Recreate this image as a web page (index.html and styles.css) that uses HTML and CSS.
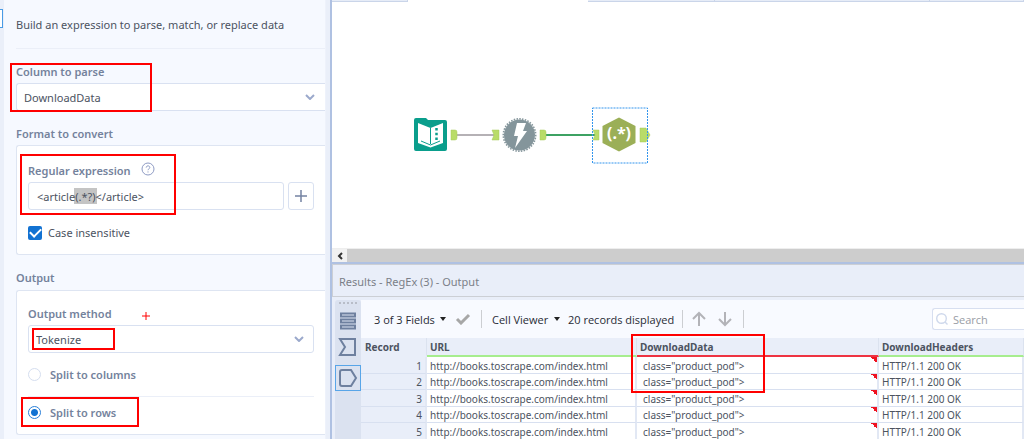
FILE: index.html
```html
<!DOCTYPE html>
<html lang="en">
<head>
<meta charset="utf-8">
<title>RegEx configuration</title>
<link rel="stylesheet" href="styles.css">
</head>
<body>
<div class="app">
  <div class="rail"><span class="rail-tab"></span></div>
  <form class="config">
    <p class="intro">Build an expression to parse, match, or replace data</p>
    <label class="label" for="column">Column to parse</label>
    <div class="picker picker-open">
      <select id="column"><option>DownloadData</option></select>
      <svg class="chevron" viewBox="0 0 10 6"><path d="M1 1l4 4 4-4"/></svg>
    </div>
    <h2 class="label">Format to convert</h2>
    <section class="card format">
      <div class="field-head">
        <label for="regex">Regular expression</label>
        <svg class="help" viewBox="0 0 14 14"><circle cx="7" cy="7" r="6"/><path d="M5.2 5.6c0-2.4 3.7-2.3 3.6 0 0 1.200-1.800 1.200-1.800 2.600M7 9.400v1.100"/></svg>
      </div>
      <div class="regex-row">
        <input class="regex" id="regex" type="text" value="&lt;article(.*?)&lt;/article&gt;">
        <button class="add" type="button" aria-label="Add"><svg viewBox="0 0 12 12"><path d="M6 0v12M0 6h12"/></svg></button>
      </div>
      <label class="check"><input type="checkbox" checked>Case insensitive</label>
    </section>
    <h2 class="label">Output</h2>
    <section class="card output">
      <label class="field-head" for="method">Output method</label>
      <div class="picker">
        <select id="method"><option>Tokenize</option></select>
        <svg class="chevron" viewBox="0 0 10 6"><path d="M1 1l4 4 4-4"/></svg>
      </div>
      <label class="radio"><input type="radio" name="split">Split to columns</label>
      <label class="radio last"><input type="radio" name="split" checked>Split to rows</label>
    </section>
  </form>
  <div class="splitter"></div>
  <main class="work">
    <div class="tabs"><span class="tab"></span><span class="tab active"></span><span class="tab"></span><span class="tab"></span><span class="tab"></span></div>
    <div class="canvas">
      <svg class="flow" viewBox="0 0 270 90">
        <path d="M57 45h39" stroke="#b5b1b5" stroke-width="2"/>
        <path d="M145 45h50" stroke="#3da263" stroke-width="2"/>
        <g fill="#b9dc68" stroke="#a6ca58" stroke-width=".5">
          <path d="M51 40h4q2 0 2 2v6q0 2-2 2h-4z"/>
          <path d="M92 40h7v10h-7l2-5z"/>
          <path d="M140 40h4q2 0 2 2v6q0 2-2 2h-4z"/>
          <path d="M193 40h6v10h-6l2-5z"/>
          <path d="M240 38h6l4 7-4 7h-6z"/>
        </g>
        <path d="M16 28h10l2 2h17q2 0 2 2v27q0 2-2 2H16q-2 0-2-2V30q0-2 2-2z" fill="#0a9e8c"/>
        <path d="M18 33l12.500 5L43 33v20l-12.500 4.500L18 53z" fill="#fff"/>
        <path d="M30.500 38v16M21 51l9.500 4 9.500-4" fill="none" stroke="#0a9e8c"/>
        <path d="M36.500 38v12" stroke="#0a9e8c" stroke-width="2.500" stroke-dasharray="2.500 2.300"/>
        <circle cx="119.500" cy="45" r="15.500" fill="#84959b"/>
        <circle cx="119.500" cy="45" r="16.200" fill="none" stroke="#84959b" stroke-width="1.600" stroke-dasharray="1.500 1.300"/>
        <path d="M117 33h9l-3 8h4l-12 17 3-12h-4z" fill="#fff"/>
        <path d="M219 27.500l16.500 8.500v17L219 61.500 202.500 53V36z" fill="#9baf57"/>
        <text x="219" y="49" text-anchor="middle" class="regex-glyph">(.*)</text>
        <path d="M192.500 18h55v55h-55z" fill="none" stroke="#3295ed" stroke-dasharray="2 1"/>
      </svg>
    </div>
    <div class="scroll"><button type="button" aria-label="Scroll left"><svg viewBox="0 0 6 8"><path d="M5 1L2 4l3 3"/></svg></button><span class="thumb"></span></div>
    <h1 class="results-title">Results - RegEx (3) - Output</h1>
    <section class="results">
      <nav class="side">
        <span class="grip"></span>
        <button type="button" aria-label="Messages"><svg viewBox="0 0 24 24"><path d="M5 4.500h14v3H5zM5 10.500h14v3H5zM5 16.500h14v3H5z"/></svg></button>
        <button type="button" aria-label="Input"><svg viewBox="0 0 24 24"><path d="M4 4h15v16H4l5-8z"/></svg></button>
        <button type="button" class="current" aria-label="Output"><svg viewBox="0 0 24 24"><path d="M6 4h9l5 8-5 8H6q-2 0-2-2V6q0-2 2-2z"/></svg></button>
      </nav>
      <div class="data">
        <div class="toolbar">
          <button type="button" class="menu fields">3 of 3 Fields<i class="caret"></i></button>
          <svg class="tick" viewBox="0 0 16 12"><path d="M2 6l4 4 8-8"/></svg>
          <i class="bar"></i>
          <button type="button" class="menu viewer">Cell Viewer<i class="caret"></i></button>
          <span class="count">20 records displayed</span>
          <i class="bar"></i>
          <button type="button" class="arrow" aria-label="Previous"><svg viewBox="0 0 16 16"><path d="M8 15V2M2 8l6-6 6 6"/></svg></button>
          <button type="button" class="arrow" aria-label="Next"><svg viewBox="0 0 16 16"><path d="M8 1v13M2 8l6 6 6-6"/></svg></button>
          <i class="bar"></i>
          <label class="search"><svg viewBox="0 0 14 14"><circle cx="6.500" cy="6.500" r="4.800"/><path d="M10 10l2.500 2.500"/></svg><input type="text" placeholder="Search" aria-label="Search"></label>
        </div>
        <table>
          <colgroup><col class="c-record"><col class="c-url"><col class="c-data"><col></colgroup>
          <thead><tr><th class="rec">Record</th><th>URL</th><th class="bad">DownloadData</th><th>DownloadHeaders</th></tr></thead>
          <tbody>
            <tr><td>1</td><td>http://books.toscrape.com/index.html</td><td>class="product_pod"&gt;</td><td>HTTP/1.1 200 OK</td></tr>
            <tr><td>2</td><td>http://books.toscrape.com/index.html</td><td>class="product_pod"&gt;</td><td>HTTP/1.1 200 OK</td></tr>
            <tr><td>3</td><td>http://books.toscrape.com/index.html</td><td>class="product_pod"&gt;</td><td>HTTP/1.1 200 OK</td></tr>
            <tr><td>4</td><td>http://books.toscrape.com/index.html</td><td>class="product_pod"&gt;</td><td>HTTP/1.1 200 OK</td></tr>
            <tr><td>5</td><td>http://books.toscrape.com/index.html</td><td>class="product_pod"&gt;</td><td>HTTP/1.1 200 OK</td></tr>
          </tbody>
        </table>
      </div>
    </section>
  </main>
  <span class="mark mark-column"></span>
  <span class="mark mark-regex"></span>
  <span class="mark mark-method"></span>
  <span class="mark mark-rows"></span>
  <span class="mark mark-data"></span>
  <svg class="cross" viewBox="0 0 8 8"><path d="M4 0v8M0 4h8"/></svg>
</div>
</body>
</html>
```
FILE: styles.css
```css
* { box-sizing: border-box; }
body { margin: 0; font-family: "Noto Sans", "Open Sans", sans-serif; font-size: 11px; color: #4c535f; }
button, input, select { font: inherit; color: inherit; margin: 0; }
button { border: 0; padding: 0; background: none; display: flex; align-items: center; justify-content: center; }
svg { fill: none; display: block; flex: none; }

.app { position: relative; display: flex; min-height: 100vh; overflow: hidden; }
.rail { width: 4px; flex: none; padding-top: 9px; background: #eaeff9; }
.rail-tab { display: block; width: 3px; height: 19px; border: 1px solid #4a9be5; border-left: 0; background: #fff; }

.config { width: 321px; flex: none; padding: 0 0 4px 12px; background: #f6f9ff; }
.intro { margin: 0 0 15px; height: 49px; line-height: 50px; border-bottom: 1px solid #ebeff8; white-space: nowrap; }
.label { display: block; margin: 0; font-size: 11px; line-height: 16px; font-weight: 600; color: #74829c; }
.picker { position: relative; display: flex; height: 28px; }
.picker select { flex: 1; appearance: none; padding: 0 7px; border: 1px solid #d9e1f1; border-radius: 3px; background: #fff; color: #4c535f; }
.picker-open { margin: 3px 0 15px; }
.picker-open select { border-right: 0; border-radius: 3px 0 0 3px; }
.chevron { position: absolute; right: 10px; top: 11px; width: 10px; height: 6px; stroke: #9ba9cc; stroke-width: 2; pointer-events: none; }

.card { margin-top: 3px; padding: 16px 11px 0; border: 1px solid #dee5f2; border-right: 0; border-radius: 3px 0 0 3px; background: #fff; }
.format { height: 110px; margin-bottom: 15px; }
.output { height: 145px; margin-top: 4px; padding-top: 14px; }
.field-head { display: flex; gap: 10px; height: 20px; line-height: 18px; font-weight: 600; color: #74829c; }
.help { width: 14px; height: 14px; stroke: #8e9bc4; }
.regex-row { display: flex; gap: 4px; }
.regex { flex: 1; min-width: 0; height: 28px; padding: 0 8px; border: 1px solid #d9e1f1; border-radius: 3px; background: linear-gradient(#c4c4c4, #c4c4c4) 45px 5px / 23px 16px no-repeat #fff; }
.add { width: 26px; height: 28px; border: 1px solid #d9e1f1; border-radius: 3px; background: #fff; }
.add svg { width: 12px; height: 12px; stroke: #7483a3; stroke-width: 1.5; }
.check, .radio { display: flex; align-items: center; }
.check { margin-top: 15px; gap: 6px; line-height: 16px; }
.check input { appearance: none; width: 14px; height: 14px; border-radius: 2px; background: #1272d2; display: grid; place-items: center; }
.check input::before { content: ""; width: 9px; height: 5px; margin-top: -3px; border: solid #fff; border-width: 0 0 2px 2px; transform: rotate(-45deg); }
.radio { height: 44px; gap: 9px; font-weight: 600; color: #74829c; border-bottom: 1px solid #ebeff8; }
.radio.last { height: 30px; border: 0; }
.radio input { appearance: none; width: 13px; height: 13px; border: 1px solid #d5deef; border-radius: 50%; background: #fff; }
.radio input:checked { border-color: #2a80d8; background: radial-gradient(#1272d2 3px, #fff 4px); }

.splitter { width: 7px; flex: none; background: #eaeff9; border-left: 1px solid #eef2fb; border-right: 2px solid #afc1e2; }
.work { flex: 1; min-width: 0; display: flex; flex-direction: column; background: #e9eef9; }
.tabs { display: grid; grid-template-columns: 76px 180px 127px 215px 1fr; height: 2px; }
.tab { background: #e6ecf7; border-bottom: 1px solid #cad5e9; border-right: 1px solid #cad5e9; }
.tab.active { background: #fff; border: 0; }
.canvas { flex: 1; padding: 88px 0 0 68px; background: #fff; }
.flow { width: 270px; height: 90px; }
.regex-glyph { font: 700 16px "Noto Sans", sans-serif; fill: #fff; }
.scroll { display: flex; height: 14px; border-top: 1px solid #eee; }
.scroll button { width: 15px; background: #f1f1f1; }
.scroll svg { width: 6px; height: 8px; stroke: #333; stroke-width: 2; }
.thumb { flex: 1; background: #cdcdcd; }
.results-title { margin: 0; height: 35px; padding-left: 7px; border-top: 2px solid #afc1e2; border-bottom: 1px solid #cccfd5; box-shadow: inset 1px 1px #cccfd5; line-height: 36px; font-size: 11px; font-weight: 400; color: #7b7f88; background: #e9eef9; }
.results { display: flex; height: 142px; padding: 3px 0 0 3px; }
.side { width: 26px; flex: none; display: flex; flex-direction: column; border-radius: 3px 3px 0 0; background: #dbe2f0; }
.side button { height: 26px; border: 1px solid transparent; }
.side .current { margin-top: 5px; border-color: #58a5e8; }
.side svg { width: 24px; height: 24px; stroke: #6e809f; stroke-width: 2; }
.grip { height: 6px; margin: 2px 4px 0; border-top: 2px dotted #b8bdc8; }
.data { flex: 1; min-width: 0; background: #f8faff; }
.toolbar { display: flex; align-items: center; height: 38px; padding-left: 13px; white-space: nowrap; font-family: "Open Sans", "Noto Sans", sans-serif; color: #282c35; }
.menu { justify-content: space-between; }
.fields { width: 72px; }
.viewer { width: 68px; }
.caret { border: 3px solid transparent; border-top: 4px solid #222; border-bottom: 0; }
.tick { width: 16px; height: 12px; margin-left: 9px; stroke: #a7a7a7; stroke-width: 3; }
.bar { width: 1px; height: 18px; margin: 0 10px; background: #ccced2; }
.count { margin-left: 8px; }
.count + .bar { margin: 0 8px; }
.arrow { width: 16px; }
.arrow + .arrow { margin-left: 10px; }
.arrow svg { width: 16px; height: 16px; stroke: #b3b3b8; stroke-width: 2; }
.search { display: flex; align-items: center; width: 92px; height: 22px; margin-left: auto; padding-left: 2px; border: 1px solid #d7dff0; border-right: 0; border-radius: 3px 0 0 3px; background: #fff; }
.search svg { width: 14px; height: 14px; stroke: #cfd9ec; stroke-width: 1.4; }
.search input { width: 65px; padding: 0 0 0 4px; border: 0; background: none; }
.search input::placeholder { color: #999da5; opacity: 1; }

table { width: 100%; table-layout: fixed; border-collapse: separate; border-spacing: 0; white-space: nowrap; line-height: 14px; }
.c-record { width: 66px; }
.c-url { width: 210px; }
.c-data { width: 242px; }
th, td { padding: 0 3px; overflow: hidden; }
th { height: 19px; padding-top: 1px; text-align: left; font-size: 10px; font-weight: 700; background: #e9eef9; border-bottom: 2px solid #a6ed8e; border-right: 1px solid #dbe2ef; }
th.rec { border-bottom-color: #e9eef9; padding-left: 4px; }
th.bad { border-bottom-color: #ee3342; }
td { height: 17px; padding-top: 1px; font-size: 10px; background: #fff; border-right: 2px solid #e2e8f4; border-bottom: 1px solid #d8e0f0; }
tbody tr:nth-child(even) td { height: 16px; }
td:first-child { text-align: right; background: #e9eef9; }
td:nth-child(3) { padding-left: 6px; background: linear-gradient(45deg, transparent 50%, #f01220 50%) right top / 6px 6px no-repeat #fff; }

.mark { position: absolute; border: 2px solid #ff0000; pointer-events: none; }
.mark-column { left: 10px; top: 63px; width: 142px; height: 49px; }
.mark-regex { left: 20px; top: 154px; width: 156px; height: 61px; }
.mark-method { left: 32px; top: 328px; width: 83px; height: 22px; }
.mark-rows { left: 21px; top: 397px; width: 118px; height: 30px; }
.mark-data { left: 631px; top: 334px; width: 134px; height: 59px; }
.cross { position: absolute; left: 142px; top: 312px; width: 8px; height: 8px; stroke: #ff0000; }
```
